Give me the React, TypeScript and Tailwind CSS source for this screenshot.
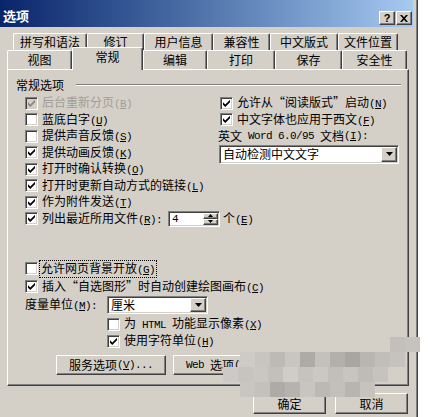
import React from "react";

const L = ({ children }: { children: React.ReactNode }) => (
  <span className="font-['Liberation_Mono'] text-[11px] tracking-[-0.6px]">{children}</span>
);
const K = ({ k }: { k: string }) => (
  <L>
    (<u className="underline-offset-[1px]">{k}</u>)
  </L>
);
const QL = () => <span className="inline-block w-[12px] text-right">“</span>;
const QR = () => <span className="inline-block w-[12px] text-left">”</span>;

const sunken =
  "border border-t-[#808080] border-l-[#808080] border-r-white border-b-white shadow-[inset_1px_1px_0_#404040,inset_-1px_-1px_0_#d4d0c8]";
const raised =
  "border border-t-white border-l-white border-r-[#404040] border-b-[#404040] shadow-[inset_-1px_-1px_0_#808080]";

function Box({ checked, disabled }: { checked?: boolean; disabled?: boolean }) {
  return (
    <span
      className={`relative inline-block w-[13px] h-[13px] shrink-0 ${sunken} ${disabled ? "bg-[#d4d0c8]" : "bg-white"}`}
    >
      {checked && (
        <svg className="absolute left-[2px] top-[2px]" width="7" height="7" viewBox="0 0 7 7">
          <path d="M0 2.2 L2.3 4.5 L7 -0.2 L7 2.3 L2.3 7 L0 4.7 Z" fill={disabled ? "#8a8782" : "#000"} />
        </svg>
      )}
    </span>
  );
}

function Row({
  checked,
  disabled,
  children,
  className = "h-[16.5px]",
}: {
  checked?: boolean;
  disabled?: boolean;
  children: React.ReactNode;
  className?: string;
}) {
  return (
    <div className={`flex items-center ${className}`}>
      <Box checked={checked} disabled={disabled} />
      <span className={`ml-[4px] whitespace-nowrap ${disabled ? "text-[#a09c97]" : "text-black"}`}>{children}</span>
    </div>
  );
}

function Arrow() {
  return (
    <svg width="7" height="4" viewBox="0 0 7 4">
      <path d="M0 0 H7 L3.5 4 Z" fill="#000" />
    </svg>
  );
}

function Combo({ className, text }: { className: string; text: string }) {
  return (
    <div className={`flex bg-white p-[1px] ${sunken} ${className}`}>
      <span className="flex-1 pl-[2px] flex items-center whitespace-nowrap">{text}</span>
      <span className={`w-[16px] flex items-center justify-center bg-[#d4d0c8] ${raised}`}>
        <Arrow />
      </span>
    </div>
  );
}

function Tab({ w, children, top }: { w: string; children: React.ReactNode; top?: boolean }) {
  return (
    <div
      className={`${w} ${top ? "h-[17px]" : "h-[19px]"} shrink-0 flex items-center justify-center border-t border-l border-white border-r border-r-[#404040] shadow-[inset_-1px_0_0_#808080] rounded-t-[2px]`}
    >
      {children}
    </div>
  );
}

const mosaic: { y: number; x: number; c: string[] }[] = [
  { y: 337, x: 390, c: ["#c3c0bc", "#c6c3bf"] },
  {
    y: 352,
    x: 240,
    c: ["#cecbc7", "#c8c5c1", "#bdbab6", "#c9c6c2", "#aeaba7", "#c4c1bd", "#b3b0ac", "#a9a6a2", "#b9b6b2", "#c1beba", "#c6c3bf"],
  },
  {
    y: 367,
    x: 223,
    c: ["#cdcac6", "#c7c4c0", "#cac7c3", "#c3c0bc", "#d0cdc9", "#c6c3bf", "#cbc8c4", "#c2bfbb", "#c8c5c1", "#bfbcb8", "#c6c3bf"],
  },
  {
    y: 382,
    x: 240,
    c: ["#c9c6c2", "#c4c1bd", "#aeaba7", "#b6b3af", "#c8c5c1", "#bcb9b5", "#c3c0bc", "#b8b5b1", "#c6c3bf"],
  },
];

export default function App() {
  return (
    <div
      className="w-[445px] h-[417px] bg-white relative overflow-hidden text-[12px] leading-[16px] text-black"
      style={{ fontFamily: '"Noto Sans CJK SC", "Noto Sans", sans-serif' }}
    >
      <div className="w-[418px] h-[417px] bg-[#d4d0c8] border-r border-r-[#404040] shadow-[inset_-1px_0_0_#808080] pr-[4px] flex flex-col">
        {/* Title bar */}
        <div className="h-[27px] shrink-0 flex bg-gradient-to-r from-[#0a246a] to-[#a6caf0] pl-[3px] pr-[1px]">
          <span className="self-center mt-[5px] text-white font-bold text-[13px]">选项</span>
          <div className="ml-auto self-end mb-[2px] flex gap-[1px]">
            <span className={`w-[16px] h-[14px] bg-[#d4d0c8] flex items-center justify-center ${raised}`}>
              <span className="font-['Liberation_Sans'] font-bold text-[11px] leading-[11px]">?</span>
            </span>
            <span className={`w-[16px] h-[14px] bg-[#d4d0c8] flex items-center justify-center ${raised}`}>
              <svg width="8" height="7" viewBox="0 0 8 7">
                <path d="M0 0 H2 L4 2.2 L6 0 H8 L5 3.5 L8 7 H6 L4 4.8 L2 7 H0 L3 3.5 Z" fill="#000" />
              </svg>
            </span>
          </div>
        </div>

        {/* Tabs */}
        <div className="mt-[6px] flex pl-[13px] h-[17px]">
          <Tab top w="w-[74px]">拼写和语法</Tab>
          <Tab top w="w-[57px]">修订</Tab>
          <Tab top w="w-[69px]">用户信息</Tab>
          <Tab top w="w-[57px]">兼容性</Tab>
          <Tab top w="w-[68px]">中文版式</Tab>
          <Tab top w="w-[60px]">文件位置</Tab>
        </div>
        <div className="flex items-start pl-[7px] h-[19px]">
          <Tab w="w-[65px]">视图</Tab>
          <div className="relative z-10 -mt-[3px] w-[71px] h-[23px] shrink-0 flex items-start justify-center pt-[1px] bg-[#d4d0c8] border-t border-l border-white border-r border-r-[#404040] shadow-[inset_-1px_0_0_#808080] rounded-t-[2px]">
            常规
          </div>
          <Tab w="w-[64px]">编辑</Tab>
          <Tab w="w-[68px]">打印</Tab>
          <Tab w="w-[67px]">保存</Tab>
          <Tab w="w-[65px]">安全性</Tab>
        </div>

        {/* Panel */}
        <div className="ml-[7px] w-[402px] h-[317px] shrink-0 border-t border-l border-white border-r border-b border-r-[#404040] border-b-[#404040] shadow-[inset_-1px_-1px_0_#808080] pt-[7px]">
          <div className="flex items-center h-[16px] pl-[8px]">
            <span>常规选项</span>
            <span className="flex-1 ml-[12px] mr-[7px] h-[2px] border-t border-t-[#808080] border-b border-b-white" />
          </div>

          <div className="flex mt-[2px]">
            <div className="w-[212px] pl-[17px] shrink-0">
              <Row checked disabled>
                后台重新分页<K k="B" />
              </Row>
              <Row>
                蓝底白字<K k="U" />
              </Row>
              <Row>
                提供声音反馈<K k="S" />
              </Row>
              <Row checked>
                提供动画反馈<K k="K" />
              </Row>
              <Row checked>
                打开时确认转换<K k="O" />
              </Row>
              <Row checked>
                打开时更新自动方式的链接<K k="L" />
              </Row>
              <Row checked>
                作为附件发送<K k="T" />
              </Row>
            </div>
            <div className="flex-1">
              <Row checked>
                允许从<QL />阅读版式<QR />启动<K k="N" />
              </Row>
              <Row checked>
                中文字体也应用于西文<K k="F" />
              </Row>
              <div className="h-[16.5px] flex items-center -ml-[2px] whitespace-nowrap">
                英文<L>&nbsp;Word 6.0/95&nbsp;</L>文档<K k="I" />
                <L>:</L>
              </div>
              <Combo className="-ml-[1px] w-[180px] h-[19px]" text="自动检测中文文字" />
            </div>
          </div>

          {/* Spin row */}
          <div className="flex items-center h-[16.5px] pl-[17px]">
            <Box checked />
            <span className="ml-[4px] whitespace-nowrap">
              列出最近所用文件<K k="R" />
              <L>:</L>
            </span>
            <div className={`ml-[6px] w-[52px] h-[16px] flex bg-white p-[1px] ${sunken}`}>
              <span className="flex-1 pl-[2px] flex items-center">
                <L>4</L>
              </span>
              <span className="w-[15px] flex flex-col">
                <span className={`flex-1 bg-[#d4d0c8] flex items-center justify-center ${raised}`}>
                  <svg width="5" height="3" viewBox="0 0 5 3">
                    <path d="M0 3 H5 L2.5 0 Z" fill="#000" />
                  </svg>
                </span>
                <span className={`flex-1 bg-[#d4d0c8] flex items-center justify-center ${raised}`}>
                  <svg width="5" height="3" viewBox="0 0 5 3">
                    <path d="M0 0 H5 L2.5 3 Z" fill="#000" />
                  </svg>
                </span>
              </span>
            </div>
            <span className="ml-[3px] whitespace-nowrap">
              个<K k="E" />
            </span>
          </div>

          <div className="mt-[32.5px] pl-[17px]">
            <div className="flex items-center h-[18px]">
              <Box />
              <span className="ml-[2px] px-[1px] outline outline-1 outline-dotted outline-black whitespace-nowrap leading-[13px]">
                允许网页背景开放<K k="G" />
              </span>
            </div>
            <Row checked className="h-[18px]">
              插入<QL />自选图形<QR />时自动创建绘图画布<K k="C" />
            </Row>
            <div className="flex items-center h-[18px]">
              <span className="w-[72px] whitespace-nowrap">
                度量单位<K k="M" />
                <L>:</L>
              </span>
              <Combo className="ml-[10px] w-[101px] h-[18px]" text="厘米" />
            </div>
          </div>
          <div className="mt-[2px] pl-[99px]">
            <Row className="h-[17px]">
              为<L>&nbsp;HTML&nbsp;</L>功能显示像素<K k="X" />
            </Row>
            <Row checked className="h-[17px]">
              使用字符单位<K k="H" />
            </Row>
          </div>
          <div className="mt-[5px] pl-[48px] flex gap-[7px]">
            <div className={`w-[110px] h-[20px] flex items-center justify-center whitespace-nowrap ${raised}`}>
              服务选项<K k="V" />
              <L>...</L>
            </div>
            <div className={`w-[110px] h-[20px] flex items-center justify-center whitespace-nowrap ${raised}`}>
              <L>Web&nbsp;</L>选项<K k="W" />
              <L>...</L>
            </div>
          </div>
        </div>

        {/* OK / Cancel */}
        <div className="mt-[7px] ml-[253px] flex gap-[9px]">
          <div className={`w-[73px] h-[21px] flex items-center justify-center ${raised}`}>确定</div>
          <div className={`w-[73px] h-[21px] flex items-center justify-center ${raised}`}>取消</div>
        </div>
      </div>

      {/* Mosaic overlay (redaction blur in the screenshot) */}
      {mosaic.map((r) =>
        r.c.map((c, i) => (
          <div
            key={`${r.y}-${i}`}
            className="absolute w-[15px] h-[15px]"
            style={{ left: r.x + i * 15, top: r.y, backgroundColor: c }}
          />
        ))
      )}
    </div>
  );
}
